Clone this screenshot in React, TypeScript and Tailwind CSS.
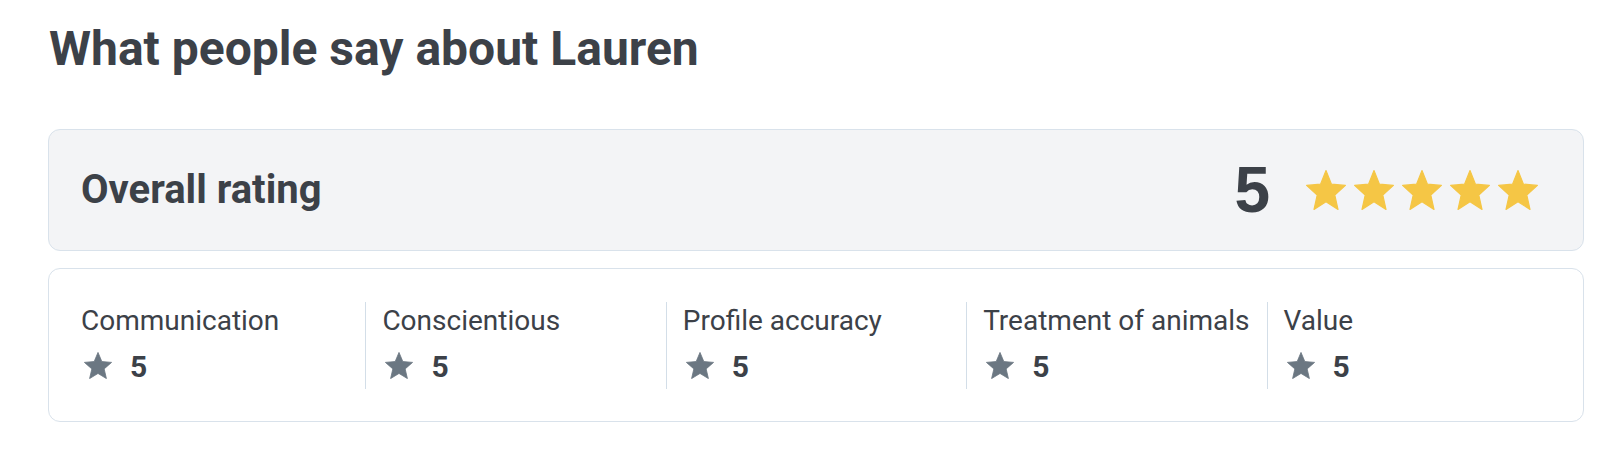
import React from "react";

const STAR = "M12 17.27L18.18 21l-1.64-7.03L22 9.24l-7.19-.61L12 2 9.19 8.63 2 9.24l5.46 4.73L5.82 21z";

function Star({ w, h, color }: { w: number; h: number; color: string }) {
  return (
    <svg width={w} height={h} viewBox="1.7 1.7 20.6 19.6" preserveAspectRatio="none" className="block shrink-0">
      <path d={STAR} fill={color} stroke={color} strokeWidth={0.6} strokeLinejoin="round" />
    </svg>
  );
}

const items = ["Communication", "Conscientious", "Profile accuracy", "Treatment of animals", "Value"];

export default function App() {
  return (
    <div
      className="w-[1606px] h-[456px] bg-white pl-12 pr-[22px] pt-[21px] text-[#3c4148]"
      style={{ fontFamily: "Roboto, 'Noto Sans', sans-serif" }}
    >
      <h1 className="text-[48px] leading-[56px] font-bold pl-[1px]">What people say about Lauren</h1>

      <div className="mt-[52px] h-[122px] rounded-xl border border-[#d9e2eb] bg-[#f3f4f6] flex items-center justify-between pl-8 pr-[45px]">
        <div className="text-[40px] leading-[44px] font-bold">Overall rating</div>
        <div className="flex items-center">
          <div
            className="text-[64px] font-bold leading-none"
            style={{ fontFamily: "'Liberation Sans', Arial, sans-serif" }}
          >
            5
          </div>
          <div className="ml-9 flex items-center gap-2">
            {[0, 1, 2, 3, 4].map((i) => (
              <Star key={i} w={40} h={40} color="#f5c645" />
            ))}
          </div>
        </div>
      </div>

      <div className="mt-[17px] h-[154px] rounded-xl border border-[#d9e2eb] bg-white px-4 pt-[33px] grid grid-cols-5">
        {items.map((label, i) => (
          <div
            key={label}
            className={`h-[87px] pl-4 flex flex-col ${i > 0 ? "border-l border-[#d3dee8]" : ""}`}
          >
            <div className="text-[28px] leading-[38px] whitespace-nowrap">{label}</div>
            <div className="mt-3 flex items-center h-[27px] pl-[3px]">
              <Star w={28} h={27} color="#6b7782" />
              <span className="ml-[18px] text-[30px] leading-[27px] font-bold pt-[2px]">5</span>
            </div>
          </div>
        ))}
      </div>
    </div>
  );
}
